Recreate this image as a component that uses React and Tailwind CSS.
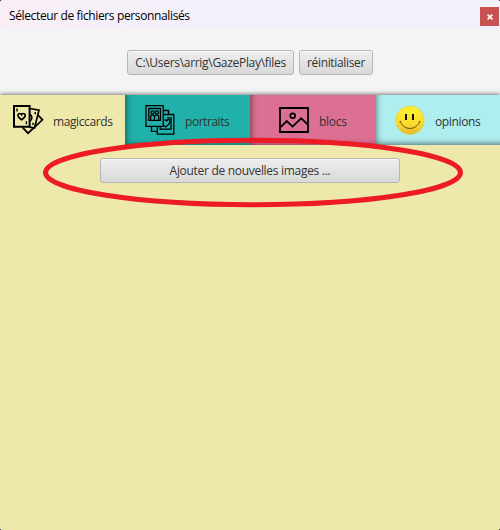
import React from "react";

const FONT = "font-['Open_Sans','Noto_Sans',sans-serif]";

function CardsIcon() {
  return (
    <svg width="32" height="32" viewBox="0 0 32 32" fill="none" stroke="#000" strokeWidth="1.7" className="shrink-0">
      <path d="M18 4.5 27 6.2 22.5 24 17.5 23.2" />
      <path d="m25.8 10.8 4.7 5L16 29.2l-5.5-5.8" />
      <path d="M18 10.5c2.5 1 2.5 5.5 0 6.5M23.3 8v2.2M21 18.8V21" strokeWidth="1.5" />
      <path d="M2 2h15.6v20.8H2z" strokeWidth="2" />
      <path d="M9.6 15.8c-2-1.4-4-3-3.6-4.9.5-1.8 2.8-1.8 3.6-.2.8-1.6 3.1-1.6 3.6.2.4 1.9-1.6 3.5-3.6 4.9Z" />
      <path d="M5 4.5v3M14.4 17.2v3" strokeWidth="1.4" />
    </svg>
  );
}

function PortraitsIcon() {
  return (
    <svg width="32" height="32" viewBox="0 0 32 32" fill="none" stroke="#000" strokeWidth="1.3" className="shrink-0">
      <path d="M19.5 6.5h5v4M7.5 22.5v4.8h5.2" />
      <path d="M19.5 10.5h10.3v19.7H13.3v-8" />
      <path d="M23 13.8h4v11.4H16.2v-3" />
      <path d="M20.3 16.4c.8-1 2-.7 2.6.3.8-1.6 2.8-1.4 3 .3.2 2.2-2.3 4.6-4.2 6l-2.1-1.8" />
      <path d="M2 1.6h17.2v20.8H2z" />
      <path d="M4.8 4.5h11.6v11.8H4.8z" />
      <circle cx="8.5" cy="8.4" r="1.6" />
      <circle cx="12.8" cy="8.4" r="1.6" />
      <path d="M6.6 16v-3c0-2.6 3.9-2.6 3.9 0v3M10.6 13c0-2.6 4.1-2.6 4.1 0v3" />
    </svg>
  );
}

function PictureIcon() {
  return (
    <svg width="32" height="32" viewBox="0 0 32 32" fill="none" stroke="#000" strokeWidth="1.8" className="shrink-0">
      <path d="M2 4h28v24H2z" />
      <circle cx="14.7" cy="11.8" r="2.4" />
      <path d="m2.3 23.3 6.5-6.2 5.7 5.5 8.7-8.3 6.8 6.5" />
    </svg>
  );
}

function SmileyIcon() {
  return (
    <svg width="32" height="32" viewBox="0 0 32 32" fill="none" className="shrink-0">
      <defs>
        <linearGradient id="face" x1="0" y1="0" x2="0" y2="1">
          <stop offset="0" stopColor="#fff22e" />
          <stop offset="0.55" stopColor="#fcdf2e" />
          <stop offset="1" stopColor="#e5b92d" />
        </linearGradient>
      </defs>
      <circle cx="16" cy="16.3" r="14.2" fill="url(#face)" stroke="#e6c93f" strokeWidth="0.7" />
      <path d="M12 10v6M19 10v6" stroke="#17130a" strokeWidth="2" />
      <path d="M6.3 17.5c3.7 9.3 15.7 9.3 19.4 0M5.5 18l1.6-1M24.9 17l1.6 1" stroke="#6b5310" strokeWidth="1" />
    </svg>
  );
}

const tabs = [
  { label: "magiccards", Icon: CardsIcon, style: "bg-[#eee8aa]", gap: "ml-3 gap-[9px]", spacing: "tracking-[-0.4px]" },
  { label: "portraits", Icon: PortraitsIcon, style: "bg-[#20b2aa] shadow-[inset_5px_-4px_6px_-4px_#00000080]", gap: "ml-[19px] gap-[9px]", spacing: "tracking-[-0.45px]" },
  { label: "blocs", Icon: PictureIcon, style: "bg-[#db7093] shadow-[inset_5px_-4px_6px_-4px_#00000080]", gap: "ml-7 gap-[9px]", spacing: "tracking-[-0.3px]" },
  { label: "opinions", Icon: SmileyIcon, style: "bg-[#afeeee] shadow-[inset_5px_-5px_6px_-4px_#00000090]", gap: "ml-[19px] gap-[9px]", spacing: "tracking-[-0.35px]" },
];

function Button({ className, children }) {
  return (
    <button className={`flex h-[25px] items-center justify-center whitespace-nowrap rounded-[3px] border border-[#b5b5b5] bg-linear-to-b from-[#eeeeee] to-[#d9d9d9] text-[12px] leading-4 text-[#333] shadow-[inset_0_1px_0_#fafafa] ${className}`}>
      {children}
    </button>
  );
}

export default function App() {
  return (
    <div className={`relative flex h-[530px] w-[500px] flex-col overflow-hidden bg-[#333] ${FONT}`}>
      <div className="flex h-full flex-col overflow-hidden rounded-[3px] bg-[#f4f4f4]">
        <header className="flex h-[29px] shrink-0 items-start justify-between bg-linear-to-r from-[#f9eef6] to-[#f2f0f9] to-45% pl-[9px] pr-px">
          <h1 className="mt-2 whitespace-nowrap text-[12px] leading-4 tracking-[-0.37px] text-black">Sélecteur de fichiers personnalisés</h1>
          <button className="mt-[7px] flex h-[19px] w-[19px] items-center justify-center bg-[#c75050]">
            <svg width="6" height="6" viewBox="0 0 6 6" stroke="#fff" strokeWidth="1.6">
              <path d="m.6.6 4.8 4.8M5.4.6.6 5.4" />
            </svg>
          </button>
        </header>
        <div className="flex h-[66px] shrink-0 justify-center gap-[5px] pt-[21px]">
          <Button className="w-[167px] tracking-[-0.3px]">C:\Users\arrig\GazePlay\files</Button>
          <Button className="w-[74px] tracking-[-0.35px]">réinitialiser</Button>
        </div>
        <nav className="grid h-[50px] shrink-0 grid-cols-4 shadow-[0_-1px_4px_#00000080]">
          {tabs.map(({ label, Icon, style, gap, spacing }) => (
            <div key={label} className={`flex ${style}`}>
              <div className={`flex h-[50px] items-center ${gap}`}>
                <Icon />
                <span className={`whitespace-nowrap pt-[3px] text-[12px] leading-4 text-[#333] ${spacing}`}>{label}</span>
              </div>
            </div>
          ))}
        </nav>
        <main className="flex grow items-start justify-center bg-[#eee8aa] pt-[13px]">
          <Button className="w-[300px] tracking-[-0.3px]">Ajouter de nouvelles images ...</Button>
        </main>
      </div>
      <svg width="500" height="530" viewBox="0 0 500 530" className="pointer-events-none absolute inset-0">
        <ellipse cx="253" cy="172.5" rx="207.5" ry="32.3" fill="none" stroke="#ed1c24" strokeWidth="5" />
      </svg>
    </div>
  );
}
